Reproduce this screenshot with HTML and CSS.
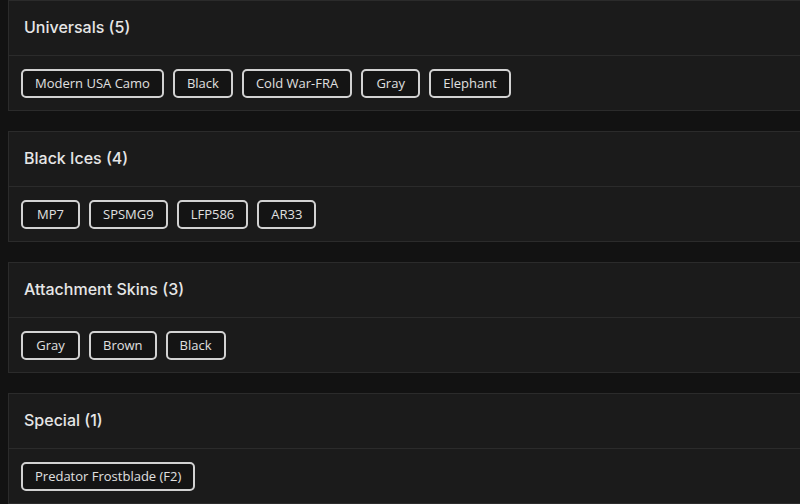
FILE: index.html
```html
<!DOCTYPE html>
<html>
<head>
<meta charset="utf-8">
<link rel="stylesheet" href="styles.css">
</head>
<body>
<div class="list">
  <section class="card">
    <div class="card-head">Universals (5)</div>
    <div class="card-body">
      <span class="chip">Modern USA Camo</span>
      <span class="chip">Black</span>
      <span class="chip">Cold War-FRA</span>
      <span class="chip">Gray</span>
      <span class="chip">Elephant</span>
    </div>
  </section>
  <section class="card">
    <div class="card-head">Black Ices (4)</div>
    <div class="card-body">
      <span class="chip">MP7</span>
      <span class="chip">SPSMG9</span>
      <span class="chip">LFP586</span>
      <span class="chip">AR33</span>
    </div>
  </section>
  <section class="card">
    <div class="card-head">Attachment Skins (3)</div>
    <div class="card-body">
      <span class="chip">Gray</span>
      <span class="chip">Brown</span>
      <span class="chip">Black</span>
    </div>
  </section>
  <section class="card">
    <div class="card-head">Special (1)</div>
    <div class="card-body">
      <span class="chip">Predator Frostblade (F2)</span>
    </div>
  </section>
</div>
</body>
</html>
```
FILE: styles.css
```css
html, body {
  background: #121212;
}
body {
  margin: 0 0 0 8px;
  overflow: hidden;
  font-family: "Open Sans", "Noto Sans", sans-serif;
  color: #e4e4e4;
}
.list {
  width: 820px;
  display: flex;
  flex-direction: column;
  gap: 20px;
}
.card {
  background: #1b1b1b;
  border: 1px solid #2b2b2b;
}
.card-head {
  height: 55px;
  box-sizing: border-box;
  display: flex;
  align-items: center;
  padding: 0 15px 2px;
  border-bottom: 1px solid #2b2b2b;
  font-family: Inter, "Open Sans", sans-serif;
  font-size: 16px;
  font-weight: 500;
  color: #e6e6e6;
}
.card-body {
  height: 54px;
  box-sizing: border-box;
  padding: 13px 12px 12px;
  display: flex;
  gap: 9px;
  align-items: flex-start;
}
.chip {
  display: inline-block;
  min-width: 59px;
  box-sizing: border-box;
  text-align: center;
  height: 29px;
  line-height: 25px;
  padding: 0 12px;
  border: 2px solid #d2d2d2;
  border-radius: 5px;
  background: #141414;
  font-size: 13px;
  color: #e0e0e0;
}
```
